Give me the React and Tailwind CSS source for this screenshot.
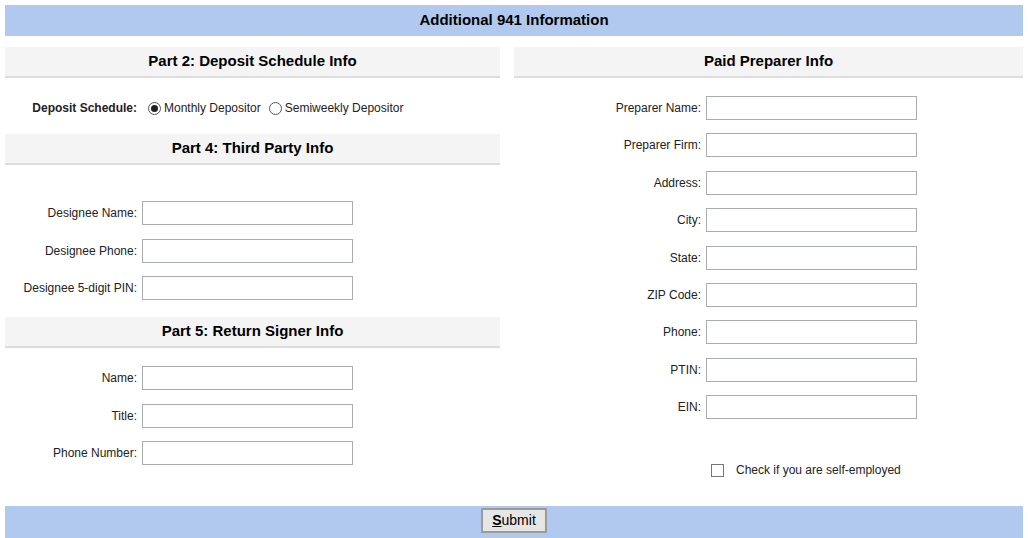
import React from 'react';

const font = { fontFamily: '"Liberation Sans", Arial, sans-serif' };

function SectionHeader({ title }) {
    return (
        <div className="h-[31px] bg-[#f4f4f4] border-b-2 border-[#dddddd] flex items-center justify-center">
            <h2 className="text-[15px] font-bold text-black">{title}</h2>
        </div>
    );
}

function Field({ label, labelWidth }) {
    return (
        <div className="flex items-center h-[24px]">
            <label className={`${labelWidth} text-right text-[12px] text-[#222] pr-[5px]`}>{label}</label>
            <input
                type="text"
                className="w-[211px] h-[24px] border border-[#a9adb2] bg-white outline-none"
            />
        </div>
    );
}

function Radio({ checked, label }) {
    return (
        <label className="flex items-center gap-[3px] text-[12px] text-[#222]">
            <span className="w-[13px] h-[13px] rounded-full border border-[#555] bg-white flex items-center justify-center">
                {checked && <span className="w-[7px] h-[7px] rounded-full bg-[#222]"></span>}
            </span>
            {label}
        </label>
    );
}

export default function App() {
    const preparerFields = ['Preparer Name:', 'Preparer Firm:', 'Address:', 'City:', 'State:', 'ZIP Code:', 'Phone:', 'PTIN:', 'EIN:'];

    return (
        <div className="w-[1028px] h-[538px] bg-white p-[5px] pb-0" style={font}>
            {/* Title bar */}
            <div className="h-[31px] bg-[#b1c9ee] flex items-center justify-center">
                <h1 className="text-[15px] font-bold text-black">Additional 941 Information</h1>
            </div>

            <div className="flex gap-[14px] mt-[11px] h-[459px]">
                {/* Left column */}
                <div className="w-[495px]">
                    <SectionHeader title="Part 2: Deposit Schedule Info" />
                    <div className="h-[56px] flex items-center pt-[4px]">
                        <span className="w-[143px] text-right pr-[11px] text-[12px] font-bold text-[#222] whitespace-nowrap">Deposit Schedule:</span>
                        <div className="flex items-center gap-[8px]">
                            <Radio checked label="Monthly Depositor" />
                            <Radio label="Semiweekly Depositor" />
                        </div>
                    </div>

                    <SectionHeader title="Part 4: Third Party Info" />
                    <div className="flex flex-col gap-[13.5px] pt-[36px] pb-[17px]">
                        <Field label="Designee Name:" labelWidth="w-[137px]" />
                        <Field label="Designee Phone:" labelWidth="w-[137px]" />
                        <Field label="Designee 5-digit PIN:" labelWidth="w-[137px]" />
                    </div>

                    <SectionHeader title="Part 5: Return Signer Info" />
                    <div className="flex flex-col gap-[13.5px] pt-[18px]">
                        <Field label="Name:" labelWidth="w-[137px]" />
                        <Field label="Title:" labelWidth="w-[137px]" />
                        <Field label="Phone Number:" labelWidth="w-[137px]" />
                    </div>
                </div>

                {/* Right column */}
                <div className="w-[509px]">
                    <SectionHeader title="Paid Preparer Info" />
                    <div className="flex flex-col gap-[13.4px] pt-[18px]">
                        {preparerFields.map((f) => (
                            <Field key={f} label={f} labelWidth="w-[192px]" />
                        ))}
                    </div>
                    <div className="flex items-center mt-[42px] pl-[197px]">
                        <span className="w-[13px] h-[13px] border border-[#777] bg-white"></span>
                        <span className="ml-[12px] text-[12px] text-[#222]">Check if you are self-employed</span>
                    </div>
                </div>
            </div>

            {/* Bottom bar */}
            <div className="h-[32px] bg-[#b1c9ee] flex justify-center pt-[2px]">
                <button className="w-[66px] h-[25px] bg-[#e6e6e6] border-2 border-[#9a9a9a] text-[14px] text-black">
                    <span className="underline font-bold">S</span>ubmit
                </button>
            </div>
        </div>
    );
}
